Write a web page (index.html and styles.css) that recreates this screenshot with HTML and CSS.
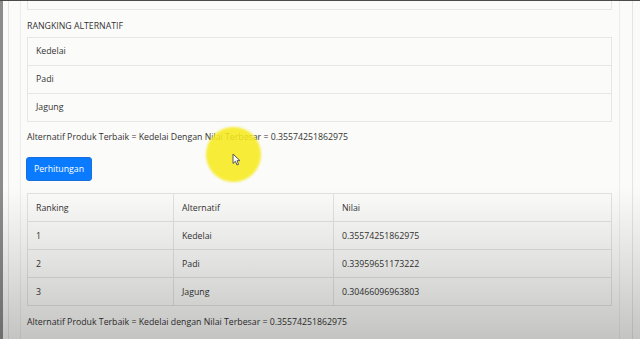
FILE: index.html
```html
<!DOCTYPE html>
<html lang="en">
<head>
    <meta charset="UTF-8">
    <meta name="viewport" content="width=device-width, initial-scale=1.0">
    <title>Rangking Alternatif</title>
    <link rel="stylesheet" href="styles.css">
</head>
<body>
    <div class="screen">
        <div class="side"></div>
        <div class="page">
            <div class="card">
                <div class="panel">
                    <div class="prev-box"></div>

                    <div class="section-title">RANGKING ALTERNATIF</div>
                    <ul class="list-group">
                        <li>Kedelai</li>
                        <li>Padi</li>
                        <li>Jagung</li>
                    </ul>

                    <p class="result">Alternatif Produk Terbaik = Kedelai Dengan Nilai Terbesar = 0.35574251862975</p>

                    <button class="btn-primary">Perhitungan</button>

                    <table class="rank-table">
                        <tr>
                            <td class="col-rank">Ranking</td>
                            <td class="col-alt">Alternatif</td>
                            <td>Nilai</td>
                        </tr>
                        <tr>
                            <td>1</td>
                            <td>Kedelai</td>
                            <td>0.35574251862975</td>
                        </tr>
                        <tr>
                            <td>2</td>
                            <td>Padi</td>
                            <td>0.33959651173222</td>
                        </tr>
                        <tr>
                            <td>3</td>
                            <td>Jagung</td>
                            <td>0.30466096963803</td>
                        </tr>
                    </table>

                    <p class="result">Alternatif Produk Terbaik = Kedelai dengan Nilai Terbesar = 0.35574251862975</p>
                </div>
            </div>
        </div>

        <!-- cursor highlight from the screen recording -->
        <div class="highlight"></div>
        <svg class="cursor" width="9" height="13" viewBox="0 0 9 13">
            <path d="M1 1 L1 10.5 L3.4 8.3 L5 12 L6.6 11.3 L5 7.7 L8 7.7 Z" fill="#fff" stroke="#555" stroke-width="1" stroke-linejoin="round"/>
        </svg>
        <div class="shade"></div>
    </div>
</body>
</html>
```

FILE: styles.css
```css
* {
    box-sizing: border-box;
}
body {
    margin: 0;
    font-family: 'Open Sans', 'Noto Sans', sans-serif;
    font-size: 8.75px;
    color: #333;
}
.screen {
    position: relative;
    display: flex;
    height: 339px;
    border-top: 1px solid #4a4a4a;
    overflow: hidden;
}
.side {
    width: 3px;
    background-color: #8c8c8c;
}
.page {
    flex: 1;
    background-color: #fbfbf9;
    padding: 0 7px 0 5px;
}
.card {
    height: 100%;
    border-left: 1px solid #e4e4e2;
    border-right: 1px solid #e4e4e2;
    padding: 0 12px 0 11px;
}
.panel {
    height: 100%;
    border-left: 1px solid #ececea;
    border-right: 1px solid #ececea;
    padding: 0 7px 0 6px;
}
.prev-box {
    height: 9px;
    border: 1px solid #e6e6e4;
    border-top: none;
}
.section-title {
    margin-top: 9px;
    height: 14px;
    line-height: 14px;
    text-transform: uppercase;
}
.list-group {
    list-style: none;
    margin: 4px 0 0;
    padding: 0;
    border: 1px solid #e6e6e4;
}
.list-group li {
    height: 28px;
    line-height: 27px;
    padding-left: 8px;
    border-top: 1px solid #e6e6e4;
}
.list-group li:first-child {
    border-top: none;
    height: 27px;
}
.result {
    margin: 8px 0 0;
    height: 14px;
    line-height: 14px;
}
.btn-primary {
    display: block;
    margin: 13px 0 0 -1px;
    width: 66px;
    height: 24px;
    background-color: #0a7bff;
    color: #fff;
    border: 1px solid #1a6fe0;
    border-radius: 3px;
    font-family: inherit;
    font-size: 8.75px;
    padding: 0;
}
.rank-table {
    width: 100%;
    margin-top: 12px;
    border-collapse: collapse;
}
.rank-table td {
    height: 28px;
    padding: 0 0 0 8px;
    border: 1px solid #e2e2e0;
    text-align: left;
}
.col-rank {
    width: 146px;
}
.col-alt {
    width: 160px;
}
.rank-table + .result {
    margin-top: 9px;
}
.highlight {
    position: absolute;
    left: 206px;
    top: 126px;
    width: 55px;
    height: 55px;
    border-radius: 50%;
    background-color: rgba(246, 234, 30, 0.88);
    filter: blur(1px);
}
.cursor {
    position: absolute;
    left: 232px;
    top: 152px;
}
.shade {
    position: absolute;
    inset: 0;
    pointer-events: none;
    background: linear-gradient(to bottom, rgba(0,0,0,0) 0%, rgba(0,0,0,0) 55%, rgba(0,0,0,0.09) 75%, rgba(0,0,0,0.22) 100%);
}
```
